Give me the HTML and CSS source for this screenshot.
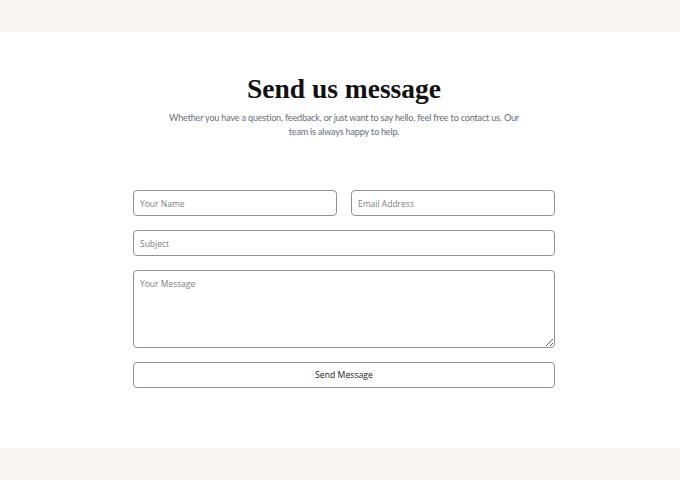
FILE: index.html
```html
<!DOCTYPE html>
<html lang="en">
<head>
<meta charset="utf-8">
<title>Contact</title>
<link rel="stylesheet" href="styles.css">
</head>
<body>
<div class="band"></div>
<section class="contact">
  <div class="inner">
    <h1 class="title">Send us message</h1>
    <p class="lead">Whether you have a question, feedback, or just want to say hello, feel free to contact us. Our team is always happy to help.</p>
    <form class="form">
      <div class="row">
        <input class="field" type="text" placeholder="Your Name">
        <input class="field" type="email" placeholder="Email Address">
      </div>
      <input class="field" type="text" placeholder="Subject">
      <textarea class="field area" placeholder="Your Message"></textarea>
      <button class="btn" type="button">Send Message</button>
    </form>
  </div>
</section>
<div class="band"></div>
</body>
</html>
```
FILE: styles.css
```css
html, body { margin: 0; padding: 0; background: #ffffff; }
body { font-family: "Open Sans", "Noto Sans", sans-serif; }
.band { height: 32px; background: #f9f5f2; }
.contact { background: #ffffff; padding: 40px 0 60px; }
.inner { padding: 0 125px 0 133px; display: flex; flex-direction: column; align-items: center; }
.title { margin: 0; font-family: "Liberation Serif", "DejaVu Serif", serif; font-weight: bold; font-size: 27.5px; line-height: 34px; color: #111111; }
.lead { margin: 5px 0 0; width: 356px; text-align: center; font-family: Lato, "Open Sans", sans-serif; font-size: 9.1px; letter-spacing: -0.2px; line-height: 14px; color: #667080; }
.form { margin-top: 51px; width: 422px; display: flex; flex-direction: column; gap: 14px; }
.row { display: flex; gap: 14px; }
.row .field { flex: 1; min-width: 0; }
.field { box-sizing: border-box; height: 26px; border: 1px solid #929292; border-radius: 4px; padding: 0 6px; font-family: inherit; font-size: 8.5px; color: #333; background: #fff; outline: none; margin: 0; }
.field::placeholder { color: #808080; }
.area { height: 78px; padding-top: 7px; resize: vertical; display: block; }
.btn { box-sizing: border-box; height: 26px; border: 1px solid #929292; border-radius: 4px; background: #fff; font-family: inherit; font-size: 8.7px; color: #222; margin: 0; }
```
